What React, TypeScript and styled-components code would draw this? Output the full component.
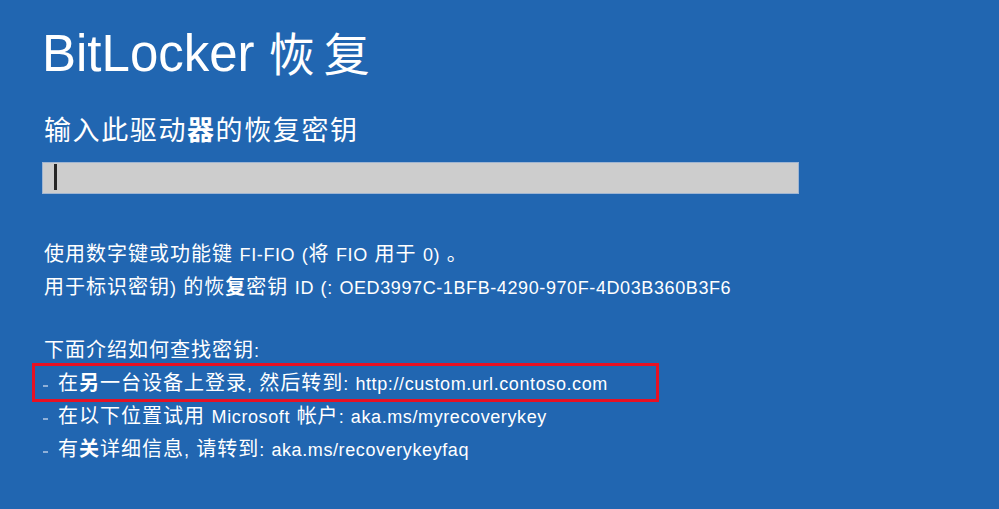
import { Fragment } from "react";
import styled, { createGlobalStyle } from "styled-components";

const GlobalStyle = createGlobalStyle`
  html, body {
    margin: 0;
    padding: 0;
    background-color: #2166b1;
  }
  body {
    overflow: hidden;
  }
`;

// CJK runs get their own size and spacing, the way the recovery screen mixes fonts
const Cjk = styled.span`
  line-height: 1;
`;

const Strong = styled.span`
  font-weight: 700;
`;

const Page = styled.main`
  box-sizing: border-box;
  width: 999px;
  height: 509px;
  padding: 24px 0 0 42px;
  background-color: #2166b1;
  color: #ffffff;
  font-family: "Liberation Sans", "Noto Sans CJK SC", sans-serif;
`;

const Title = styled.h1`
  margin: 0;
  font-size: 51px;
  font-weight: 400;
  line-height: 60px;

  ${Cjk} {
    font-size: 46px;
    letter-spacing: 9px;
  }
`;

const Subtitle = styled.h2`
  margin: 29px 0 0 2px;
  font-size: 27px;
  font-weight: 400;
  line-height: 36px;

  ${Cjk} {
    font-size: 27px;
    letter-spacing: 1.6px;
  }
`;

const KeyInput = styled.div`
  box-sizing: border-box;
  display: flex;
  align-items: center;
  margin-top: 13px;
  width: 757px;
  height: 32px;
  padding-left: 11px;
  background-color: #cdcdcd;
  border: 1px solid #9fb5d2;
`;

const Caret = styled.span`
  width: 3px;
  height: 26px;
  margin-top: -2px;
  background-color: #262626;
`;

const Para = styled.p<{ $gap: number }>`
  margin: ${(props) => props.$gap}px 0 0 2px;
  font-size: 18px;
  line-height: 33px;
  letter-spacing: 0.6px;
  word-spacing: 1px;

  ${Cjk} {
    font-size: 20px;
    letter-spacing: 1px;
  }
`;

const Steps = styled.ul`
  list-style: none;
  margin: 0;
  padding: 0;
`;

const Step = styled.li<{ $highlight?: boolean }>`
  position: relative;
  display: flex;
  align-items: center;
  gap: 10px;
  font-size: 18px;
  line-height: 33px;
  letter-spacing: 0.6px;
  word-spacing: 1px;

  ${Cjk} {
    font-size: 20px;
    letter-spacing: 1px;
  }

  &::after {
    content: "";
    display: ${(props) => (props.$highlight ? "block" : "none")};
    position: absolute;
    left: -10px;
    top: -5px;
    width: 627px;
    height: 39px;
    box-sizing: border-box;
    border: 3px solid #e81123;
    pointer-events: none;
  }
`;

const Dash = styled.span`
  flex: none;
  width: 5px;
  height: 2px;
  margin-left: 1px;
  margin-top: 2px;
  background-color: #8fb0d8;
`;

const CJK_RUN = /([\u2e80-\u9fff\u3000-\u303f\uff00-\uffef]+)/;

// *x* marks a bold run
function Runs({ text }: { text: string }) {
  return (
    <>
      {text
        .split(/(\*[^*]+\*)/)
        .filter(Boolean)
        .map((part, i) => {
          const bold = part.startsWith("*");
          const body = bold ? part.slice(1, -1) : part;
          const pieces = body
            .split(CJK_RUN)
            .filter(Boolean)
            .map((p, j) => (CJK_RUN.test(p) ? <Cjk key={j}>{p}</Cjk> : p));
          return bold ? (
            <Strong key={i}>{pieces}</Strong>
          ) : (
            <Fragment key={i}>{pieces}</Fragment>
          );
        })}
    </>
  );
}

const steps = [
  {
    text: "在*另*一台设备上登录, 然后转到: http://custom.url.contoso.com",
    highlight: true,
  },
  { text: "在以下位置试用 Microsoft 帐户: aka.ms/myrecoverykey" },
  { text: "有*关*详细信息, 请转到: aka.ms/recoverykeyfaq" },
];

function App() {
  return (
    <Page>
      <GlobalStyle />
      <Title>
        <Runs text="BitLocker 恢复" />
      </Title>
      <Subtitle>
        <Runs text="输入此驱动*器*的恢复密钥" />
      </Subtitle>
      <KeyInput role="textbox" aria-label="恢复密钥">
        <Caret />
      </KeyInput>
      <Para $gap={45}>
        <Runs text="使用数字键或功能键 FI-FIO (将 FIO 用于 0) 。" />
        <br />
        <Runs text="用于标识密钥) 的恢*复*密钥 ID (: OED3997C-1BFB-4290-970F-4D03B360B3F6" />
      </Para>
      <Para $gap={30}>
        <Runs text="下面介绍如何查找密钥:" />
      </Para>
      <Steps>
        {steps.map((step) => (
          <Step key={step.text} $highlight={step.highlight}>
            <Dash />
            <span>
              <Runs text={step.text} />
            </span>
          </Step>
        ))}
      </Steps>
    </Page>
  );
}

export default App;
